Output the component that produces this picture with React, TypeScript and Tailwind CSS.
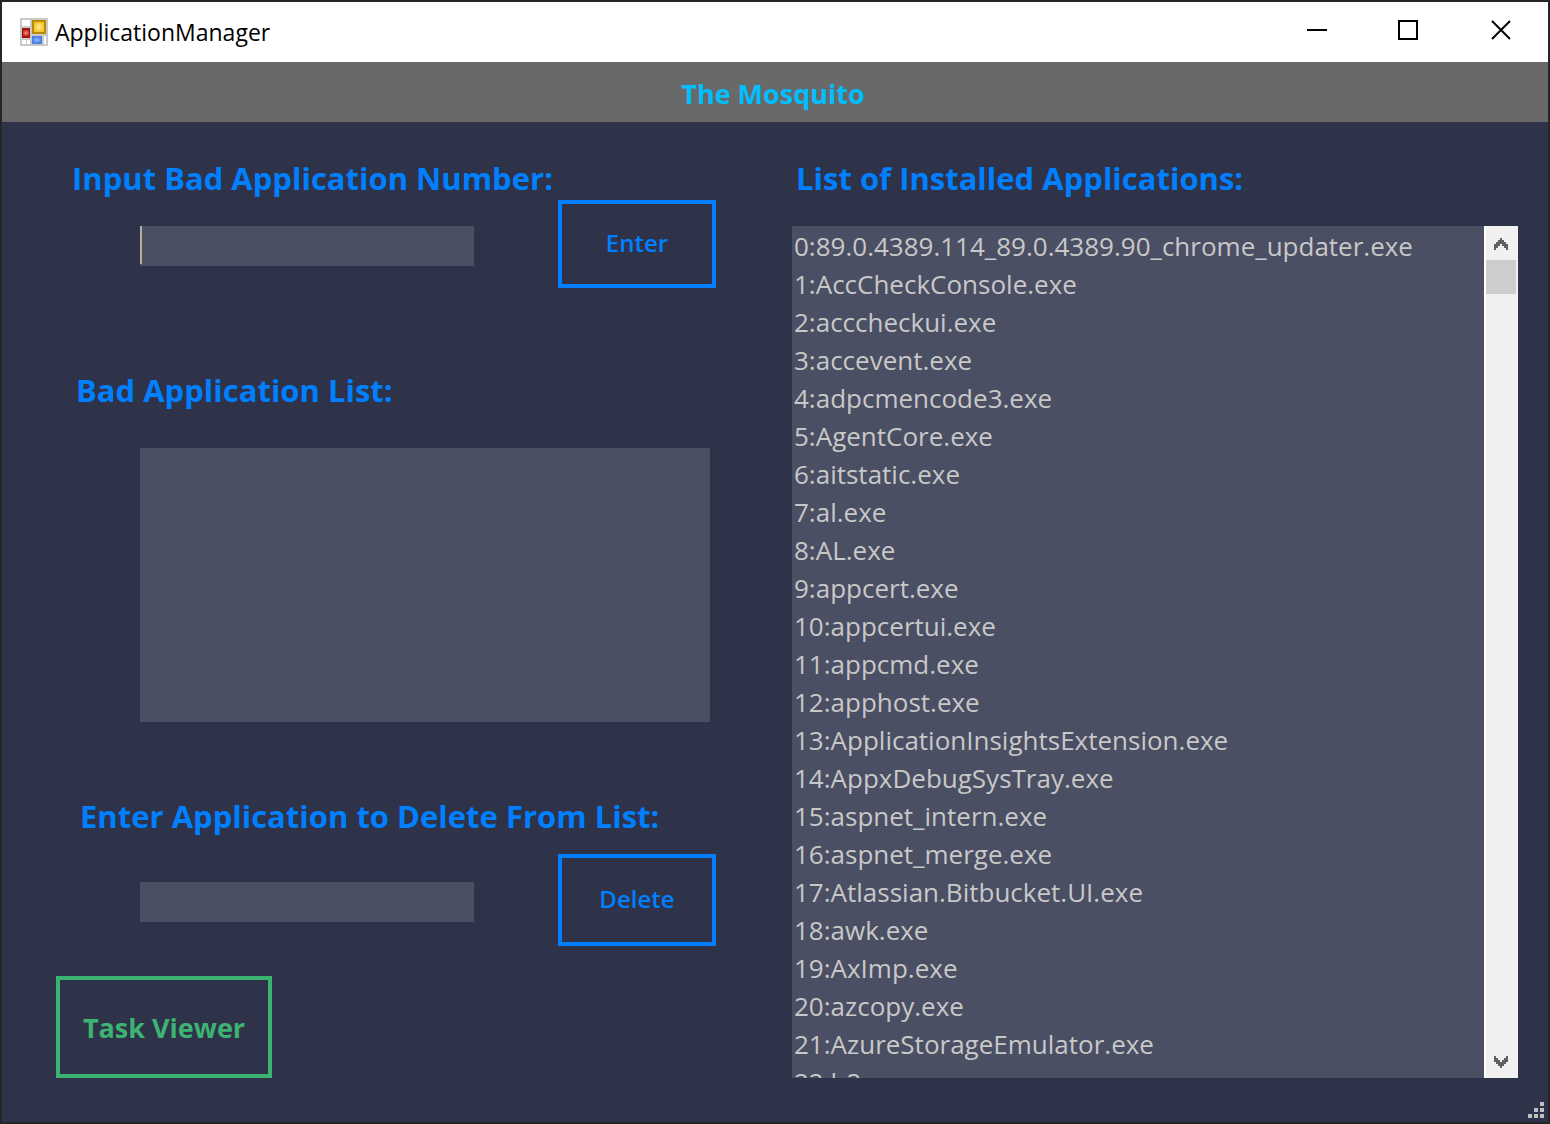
import React from "react";

const applications = [
  "0:89.0.4389.114_89.0.4389.90_chrome_updater.exe",
  "1:AccCheckConsole.exe",
  "2:acccheckui.exe",
  "3:accevent.exe",
  "4:adpcmencode3.exe",
  "5:AgentCore.exe",
  "6:aitstatic.exe",
  "7:al.exe",
  "8:AL.exe",
  "9:appcert.exe",
  "10:appcertui.exe",
  "11:appcmd.exe",
  "12:apphost.exe",
  "13:ApplicationInsightsExtension.exe",
  "14:AppxDebugSysTray.exe",
  "15:aspnet_intern.exe",
  "16:aspnet_merge.exe",
  "17:Atlassian.Bitbucket.UI.exe",
  "18:awk.exe",
  "19:AxImp.exe",
  "20:azcopy.exe",
  "21:AzureStorageEmulator.exe",
  "22:b2",
];

function FormIcon() {
  return (
    <svg width="28" height="28" viewBox="0 0 28 28" aria-hidden="true">
      <defs>
        <radialGradient id="gold">
          <stop offset="0" stopColor="#ffec9c" />
          <stop offset="1" stopColor="#f5c52c" />
        </radialGradient>
        <radialGradient id="ruby">
          <stop offset="0" stopColor="#f3a090" />
          <stop offset="1" stopColor="#c22a1c" />
        </radialGradient>
        <radialGradient id="azure">
          <stop offset="0" stopColor="#9cc4ff" />
          <stop offset="1" stopColor="#4c84e6" />
        </radialGradient>
      </defs>
      <rect width="28" height="28" rx="1" fill="#c9c9c9" />
      <rect x="2" y="2" width="8" height="6" fill="#fff" />
      <rect x="2" y="22" width="4" height="4" fill="#fff" />
      <rect x="7" y="22" width="3" height="4" fill="#fff" />
      <rect x="24" y="18" width="2" height="8" fill="#fff" />
      <rect x="12" y="2" width="14" height="14" fill="#b98a0a" />
      <rect x="14" y="4" width="10" height="10" fill="url(#gold)" />
      <rect x="2" y="10" width="8" height="10" fill="#a3150e" />
      <rect x="3" y="12" width="6" height="6" fill="url(#ruby)" />
      <rect x="12" y="18" width="10" height="8" fill="#4a7fe0" />
      <rect x="13" y="19" width="8" height="6" fill="url(#azure)" />
    </svg>
  );
}

function TitleBar() {
  return (
    <header className="flex h-[60px] shrink-0 items-start bg-white pl-[18px] text-black">
      <div className="flex h-full flex-1 items-center">
        <FormIcon />
        <h1 className="pl-[7px] text-[23px] leading-8">ApplicationManager</h1>
      </div>
      <button aria-label="Minimize" className="flex h-14 w-[90px] items-center justify-center">
        <svg width="20" height="20" shapeRendering="crispEdges">
          <rect y="9" width="20" height="2" />
        </svg>
      </button>
      <button aria-label="Maximize" className="flex h-14 w-[92px] items-center justify-center">
        <svg width="20" height="20" shapeRendering="crispEdges">
          <rect x="1" y="1" width="18" height="18" fill="none" stroke="#000" strokeWidth="2" />
        </svg>
      </button>
      <button aria-label="Close" className="flex h-14 w-[94px] items-center justify-center">
        <svg width="20" height="20">
          <path d="M1 1 19 19M19 1 1 19" stroke="#000" strokeWidth="2" />
        </svg>
      </button>
    </header>
  );
}

function ScrollBar() {
  return (
    <div className="flex w-[34px] shrink-0 flex-col border-l-2 border-white bg-[#f0f0f0]">
      <button aria-label="Scroll up" className="flex h-[34px] w-[30px] items-center justify-center pt-0.5">
        <svg width="14" height="12" shapeRendering="crispEdges">
          <path d="M6 0h2v2h2v2h2v2h2v6h-2v-2h-2v-2h-2v-2h-2v2h-2v2h-2v2h-2v-6h2v-2h2v-2h2z" fill="#606060" />
        </svg>
      </button>
      <div className="h-[34px] w-[30px] bg-[#cdcdcd]" />
      <div className="flex-1" />
      <button aria-label="Scroll down" className="flex h-[34px] w-[30px] items-center justify-center pt-0.5">
        <svg width="14" height="12" shapeRendering="crispEdges">
          <path d="M6 12h2v-2h2v-2h2v-2h2v-6h-2v2h-2v2h-2v2h-2v-2h-2v-2h-2v-2h-2v6h2v2h2v2h2z" fill="#606060" />
        </svg>
      </button>
    </div>
  );
}

function SizeGrip() {
  return (
    <svg
      className="absolute right-1 bottom-1"
      width="16"
      height="16"
      fill="#bfbfbf"
      shapeRendering="crispEdges"
      aria-hidden="true"
    >
      <path d="M12 0h4v4h-4zM6 6h4v4h-4zM12 6h4v4h-4zM0 12h4v4h-4zM6 12h4v4h-4zM12 12h4v4h-4z" />
    </svg>
  );
}

const label = "block text-[31px] font-bold leading-10";
const action = "w-[158px] border-4 border-[#007fff] pb-0.5 text-2xl font-semibold";

export default function App() {
  return (
    <div className="flex h-screen flex-col border-2 border-[#262626] bg-[#2e3349] font-['Open_Sans',sans-serif] text-[#007fff]">
      <TitleBar />
      <div className="flex h-[60px] shrink-0 items-center justify-center bg-[#696969] pt-1 pr-1 text-[27px] font-bold text-[#00bfff]">
        The Mosquito
      </div>
      <main className="relative flex min-h-0 flex-1 pt-9 pr-[30px] pb-11">
        <form className="flex w-[790px] shrink-0 flex-col pl-[54px]" onSubmit={(e) => e.preventDefault()}>
          <label htmlFor="bad-number" className={`${label} pl-4`}>
            Input Bad Application Number:
          </label>
          <div className="mt-0.5 flex items-start justify-between pr-[76px] pl-[84px]">
            <div className="mt-[26px] flex bg-[#4a4f63]">
              <span className="h-[38px] w-0.5 bg-[#b5b09c]" />
              <input
                id="bad-number"
                className="block h-10 w-[332px] bg-transparent px-1 text-[26px] text-[#c8c8c8] outline-none"
              />
            </div>
            <button className={`${action} h-[88px]`}>Enter</button>
          </div>
          <label htmlFor="bad-list" className={`${label} mt-[82px] pl-5`}>
            Bad Application List:
          </label>
          <textarea
            id="bad-list"
            readOnly
            className="mt-[38px] mr-[82px] ml-[84px] block h-[274px] resize-none bg-[#4a4f63] p-1 text-[26px] text-[#c8c8c8] outline-none"
          />
          <label htmlFor="delete-name" className={`${label} mt-[74px] pl-6`}>
            Enter Application to Delete From List:
          </label>
          <div className="mt-[18px] flex items-start justify-between pr-[76px] pl-[84px]">
            <input
              id="delete-name"
              className="mt-7 block h-10 w-[334px] bg-[#4a4f63] px-1 text-[26px] text-[#c8c8c8] outline-none"
            />
            <button className={`${action} h-[92px]`}>Delete</button>
          </div>
          <button className="mt-[30px] h-[102px] w-[216px] border-4 border-[#3cb371] pt-0.5 text-[27px] font-bold text-[#3cb371]">
            Task Viewer
          </button>
        </form>
        <section className="flex min-w-0 flex-1 flex-col">
          <h2 className={`${label} pl-1`}>List of Installed Applications:</h2>
          <div className="mt-7 flex min-h-0 flex-1 bg-[#4a4f63]">
            <ul className="min-w-0 flex-1 overflow-hidden pt-px pl-0.5 text-[26px] leading-[38px] text-[#c8c8c8]">
              {applications.map((name) => (
                <li key={name} className="whitespace-nowrap">
                  {name}
                </li>
              ))}
            </ul>
            <ScrollBar />
          </div>
        </section>
        <SizeGrip />
      </main>
    </div>
  );
}
